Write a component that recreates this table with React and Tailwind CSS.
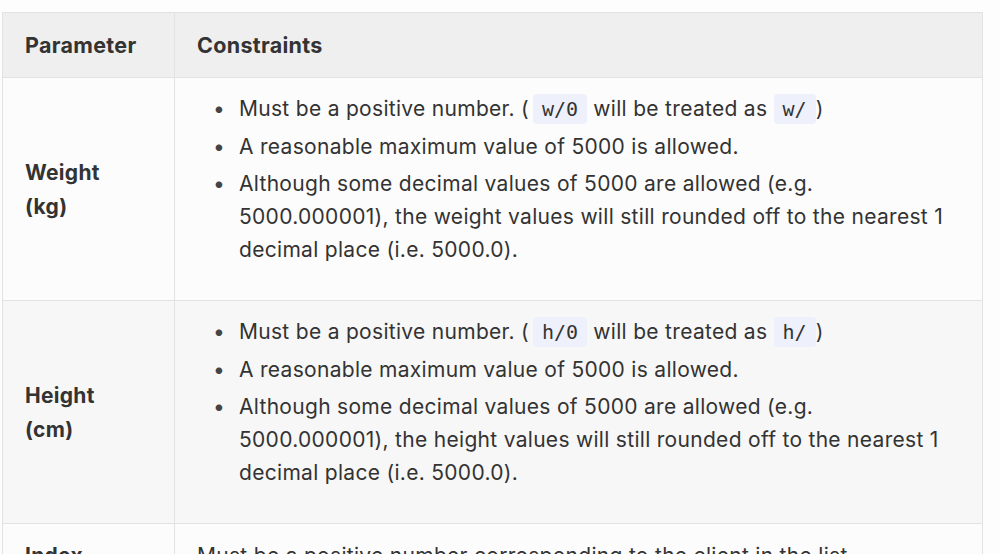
import React from 'react';

const rows = [
  { name: ['Weight', '(kg)'], prefix: 'w', word: 'weight', bg: 'bg-[#fcfcfc]' },
  { name: ['Height', '(cm)'], prefix: 'h', word: 'height', bg: 'bg-[#f7f7f7]' },
];

const Code = ({ children, className = '' }) => (
  <code className={`rounded-[4px] bg-[#eef0fb] px-[9px] py-[3px] font-['DejaVu_Sans_Mono',monospace] text-[20px] tracking-normal text-[#333] ${className}`}>
    {children}
  </code>
);

const Item = ({ children, className = '' }) => (
  <li className={`flex ${className}`}>
    <span className="w-[26px] shrink-0 text-[#444]">•</span>
    <span>{children}</span>
  </li>
);

const App = () => {
  return (
    <div className="min-h-[554px] w-[1000px] bg-[#fdfdfd] pl-[2px] pt-[12px] font-['Inter',sans-serif] text-[#333] tracking-[0.3px]">
      <table className="w-[981px] border-collapse text-left">
        <thead>
          <tr className="bg-[#efefef]">
            <th className="h-[65px] w-[172px] border border-[#e2e2e2] px-[22px] text-[21.5px] font-bold">Parameter</th>
            <th className="h-[65px] border border-[#e2e2e2] px-[22px] text-[21.5px] font-bold">Constraints</th>
          </tr>
        </thead>
        <tbody>
          {rows.map((row) => (
            <tr key={row.prefix} className={row.bg}>
              <td className="h-[223px] border border-[#e2e2e2] px-[22px] pt-[2px] align-middle text-[21px] font-bold leading-[34px]">
                {row.name[0]}
                <br />
                {row.name[1]}
              </td>
              <td className="h-[223px] border border-[#e2e2e2] pl-[22px] pr-[12px] pt-[14px] pb-[34px] align-top text-[21px] leading-[33px]">
                <ul className="pl-[16px]">
                  <Item>
                    Must be a positive number. (<Code className="ml-[4px]">{row.prefix}/0</Code> will be treated as <Code>{row.prefix}/</Code>)
                  </Item>
                  <Item className="mt-[4px]">A reasonable maximum value of 5000 is allowed.</Item>
                  <Item className="mt-[4px]">
                    Although some decimal values of 5000 are allowed (e.g.
                    <br />
                    5000.000001), the {row.word} values will still rounded off to the nearest 1
                    <br />
                    decimal place (i.e. 5000.0).
                  </Item>
                </ul>
              </td>
            </tr>
          ))}
          <tr className="bg-[#fcfcfc]">
            <td className="h-[60px] border border-[#e2e2e2] px-[22px] pt-[15px] align-top text-[21px] font-bold leading-[34px]">
              Index
            </td>
            <td className="border border-[#e2e2e2] px-[22px] pt-[15px] align-top text-[21px] leading-[33px]">
              Must be a positive number corresponding to the client in the list.
            </td>
          </tr>
        </tbody>
      </table>
    </div>
  );
};

export default App;
